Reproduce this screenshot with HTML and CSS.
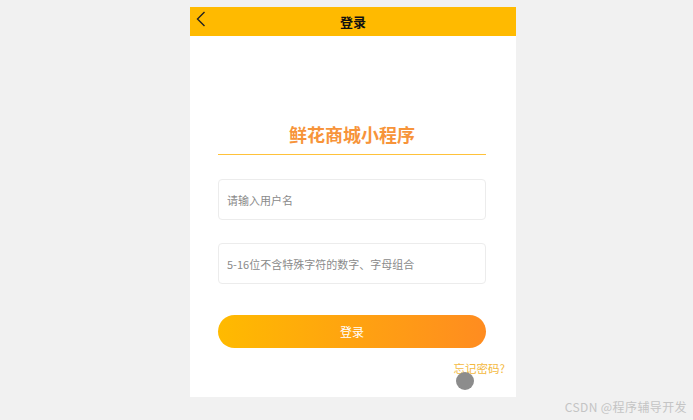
FILE: index.html
```html
<!DOCTYPE html>
<html lang="zh-CN">
<head>
    <meta charset="UTF-8">
    <meta name="viewport" content="width=device-width, initial-scale=1.0">
    <title>登录</title>
    <link rel="stylesheet" href="styles.css">
</head>
<body>
    <div class="phone">
        <div class="header">
            <span class="back">
                <svg width="10" height="16" viewBox="0 0 10 16"><path d="M8.5 1 L1.5 8 L8.5 15" fill="none" stroke="#222" stroke-width="1.4"/></svg>
            </span>
            <span class="header-title">登录</span>
        </div>
        <div class="content">
            <div class="brand">鲜花商城小程序</div>
            <div class="field">
                <input type="text" placeholder="请输入用户名">
            </div>
            <div class="field">
                <input type="password" placeholder="5-16位不含特殊字符的数字、字母组合">
            </div>
            <button class="login-button">登录</button>
            <div class="forgot">忘记密码?</div>
        </div>
        <div class="touch"></div>
    </div>
    <div class="watermark">CSDN @程序辅导开发</div>
</body>
</html>
```

FILE: styles.css
```css
body {
    margin: 0;
    padding: 0;
    background: #f1f1f1;
    font-family: "Noto Sans CJK SC", "Noto Sans", sans-serif;
    height: 420px;
    overflow: hidden;
}
.phone {
    position: relative;
    margin-left: 190px;
    margin-top: 7px;
    width: 326px;
    height: 390px;
    background: #fff;
}
.header {
    position: relative;
    height: 29px;
    background: #ffba00;
    display: flex;
    justify-content: center;
    align-items: center;
}
.back {
    position: absolute;
    left: 6px;
    top: 4px;
    line-height: 0;
}
.header-title {
    font-size: 13px;
    font-weight: bold;
    color: #111;
}
.content {
    padding: 0 30px 0 28px;
}
.brand {
    margin-top: 86px;
    font-size: 18px;
    line-height: 24px;
    font-weight: bold;
    color: #f7943a;
    text-align: center;
    padding-bottom: 8px;
    border-bottom: 1px solid #ffc23a;
}
.field {
    margin-top: 24px;
    height: 39px;
    border: 1px solid #ececec;
    border-radius: 4px;
    display: flex;
    align-items: center;
}
.field + .field {
    margin-top: 23px;
}
.field input {
    border: none;
    outline: none;
    background: transparent;
    width: 100%;
    padding: 0 8px;
    font-family: inherit;
    font-size: 11px;
    color: #333;
}
.field input::placeholder {
    color: #8a8a8a;
}
.login-button {
    display: block;
    width: 100%;
    margin-top: 31px;
    height: 33px;
    border: none;
    border-radius: 17px;
    background: linear-gradient(90deg, #ffba00, #ff8c20);
    color: #fff;
    font-family: inherit;
    font-size: 12px;
}
.forgot {
    margin-top: 13px;
    margin-right: -19px;
    text-align: right;
    font-size: 11.5px;
    line-height: 14px;
    color: #f4b93e;
}
.touch {
    position: absolute;
    left: 266px;
    top: 365px;
    width: 18px;
    height: 18px;
    border-radius: 50%;
    background: #8c8c8c;
}
.watermark {
    position: absolute;
    right: 6px;
    top: 398px;
    font-size: 12px;
    letter-spacing: 0.4px;
    color: #c4c4c4;
    font-family: "Noto Sans CJK SC", sans-serif;
}
```
